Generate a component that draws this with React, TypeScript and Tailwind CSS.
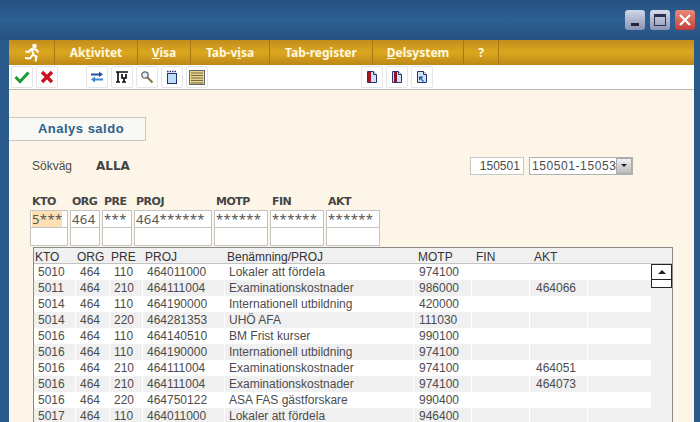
import React from "react";

const menu = [
  { w: "w-[83px]", pre: "Ak", u: "t", post: "ivitet" },
  { w: "w-[53px]", pre: "", u: "V", post: "isa" },
  { w: "w-[79px]", pre: "Tab-v", u: "i", post: "sa" },
  { w: "w-[103px]", pre: "Tab-re", u: "g", post: "ister" },
  { w: "w-[91px]", pre: "", u: "D", post: "elsystem" },
  { w: "w-[35px]", pre: "?", u: "", post: "" },
];

const filters = [
  { label: "KTO", w: "w-[38px]", value: "5***", hl: true },
  { label: "ORG", w: "w-[30px]", value: "464" },
  { label: "PRE", w: "w-[30px]", value: "***" },
  { label: "PROJ", w: "w-[78px]", value: "464******" },
  { label: "MOTP", w: "w-[54px]", value: "******" },
  { label: "FIN", w: "w-[54px]", value: "******" },
  { label: "AKT", w: "w-[54px]", value: "******" },
];

const headers = [
  { t: "KTO", pad: "pl-[1px]" },
  { t: "ORG", pad: "pl-[1px]" },
  { t: "PRE", pad: "pl-[1px]" },
  { t: "PROJ", pad: "pl-[2px]" },
  { t: "Benämning/PROJ", pad: "pl-[2px]" },
  { t: "MOTP", pad: "pl-[4px]" },
  { t: "FIN", pad: "pl-[4px]" },
  { t: "AKT", pad: "pl-[4px]" },
];

const cellPad = ["pl-[4px]", "pl-[4px]", "pl-[4px]", "pl-[4px]", "pl-[4px]", "pl-[5px]", "pl-[4px]", "pl-[6px]"];

const rows = [
  ["5010", "464", "110", "464011000", "Lokaler att fördela", "974100", "", ""],
  ["5011", "464", "210", "464111004", "Examinationskostnader", "986000", "", "464066"],
  ["5014", "464", "110", "464190000", "Internationell utbildning", "420000", "", ""],
  ["5014", "464", "220", "464281353", "UHÖ AFA", "111030", "", ""],
  ["5016", "464", "110", "464140510", "BM Frist kurser", "990100", "", ""],
  ["5016", "464", "110", "464190000", "Internationell utbildning", "974100", "", ""],
  ["5016", "464", "210", "464111004", "Examinationskostnader", "974100", "", "464051"],
  ["5016", "464", "210", "464111004", "Examinationskostnader", "974100", "", "464073"],
  ["5016", "464", "220", "464750122", "ASA FAS gästforskare", "990400", "", ""],
  ["5017", "464", "110", "464011000", "Lokaler att fördela", "946400", "", ""],
];

const colClass = "grid grid-cols-[42px_34px_33px_82px_189px_58px_58px_58px_63px_1fr]";

const ToolBtn = ({ children }: { children: React.ReactNode }) => (
  <div className="w-[22px] h-[22px] shrink-0 flex items-center justify-center rounded-[2px] border border-[#e6e6e6] bg-white">
    {children}
  </div>
);

const DocIcon = ({ mark }: { mark: "left" | "mid" | "arrow" }) => (
  <svg width="14" height="14" viewBox="0 0 14 14">
    <path d="M2.500 1.500h6l3 3v8h-9z" fill="#cfe2f5" stroke="#26336b" />
    <path d="M8.500 1.500v3h3" fill="#fff" stroke="#26336b" />
    {mark === "left" && <rect x="3" y="2" width="3" height="10" fill="#a8142a" />}
    {mark === "mid" && <rect x="4" y="2" width="3" height="10" fill="#8c1230" />}
    {mark === "arrow" && <path d="M9 11 6.500 8.500 8.500 6.500H4V10.500L5.500 9 8 12z" fill="#1f50b0" />}
  </svg>
);

export default function App() {
  return (
    <div className="w-[700px] h-[422px] overflow-hidden bg-[#2a5a8c] font-['Liberation_Sans',sans-serif] text-[12px] text-[#4c4c4c]">
      {/* titlebar */}
      <div className="h-[40px] flex items-start justify-end gap-[5px] pt-[10px] pr-[5px] bg-gradient-to-b from-[#25527f] via-[#2e6095] to-[#25527f]">
        <div className="w-[20px] h-[20px] rounded-[3px] bg-gradient-to-b from-[#cfd6e6] to-[#8d94b4] flex items-end justify-center pb-[4px]">
          <div className="w-[8px] h-[3px] bg-[#23283f]" />
        </div>
        <div className="w-[20px] h-[20px] rounded-[3px] bg-gradient-to-b from-[#d8deeb] to-[#8d94b4] flex items-center justify-center">
          <div className="w-[12px] h-[12px] border border-[#2a3050] border-t-[3px]" />
        </div>
        <div className="w-[20px] h-[20px] rounded-[3px] bg-gradient-to-b from-[#e88a78] to-[#c43c3c] flex items-center justify-center">
          <svg width="14" height="14" viewBox="0 0 14 14">
            <path d="M2 2l10 10M12 2 2 12" stroke="#fff" strokeWidth="2.200" />
          </svg>
        </div>
      </div>

      <div className="ml-[9px] w-[685px] h-[382px] bg-[#fdf6e8]">
        {/* menu */}
        <div className="h-[25px] flex bg-gradient-to-b from-[#c28c1c] via-[#dca81f] to-[#bd8717] font-['Noto_Sans',sans-serif] font-bold text-[12px] text-[#fff8e0]">
          <div className="w-[46px] flex items-center justify-center border-r border-[#a87a14]">
            <svg width="18" height="20" viewBox="0 0 18 20">
              <circle cx="11.500" cy="3" r="2.300" fill="#fff" />
              <path d="M8 6l5 .5 2.500 3M8.500 6 5.500 9 2.500 8.500M9 7l1.500 5 3 1.500-1 5M9.500 12 7 15.500 2 15" fill="none" stroke="#fff" strokeWidth="2" />
            </svg>
          </div>
          {menu.map((m) => (
            <div key={m.pre + m.u} className={`${m.w} flex items-center justify-center border-r border-[#a87a14]`}>
              <span>
                {m.pre}
                {m.u && <span className="underline">{m.u}</span>}
                {m.post}
              </span>
            </div>
          ))}
        </div>

        {/* toolbar */}
        <div className="h-[25px] flex items-center gap-[3px] pl-[2px] bg-white border-b border-[#bdb8ae]">
          <ToolBtn>
            <svg width="16" height="14" viewBox="0 0 16 14">
              <path d="M1.500 7 6 11.500 14.500 2.500" fill="none" stroke="#1f9a35" strokeWidth="3" />
            </svg>
          </ToolBtn>
          <ToolBtn>
            <svg width="14" height="14" viewBox="0 0 14 14">
              <path d="M2 2l10 10M12 2 2 12" stroke="#c8141e" strokeWidth="3.400" />
            </svg>
          </ToolBtn>
          <div className="w-[22px]" />
          <ToolBtn>
            <svg width="14" height="12" viewBox="0 0 14 12">
              <path d="M1 2.500h8V.5l4 3-4 2.500V4.500H1z" fill="#2b4fa0" />
              <path d="M13 7.500H5V5.500L1 8.500l4 3V9.500h8z" fill="#3d86cc" />
            </svg>
          </ToolBtn>
          <ToolBtn>
            <svg width="14" height="12" viewBox="0 0 14 12">
              <path d="M1 1h12M3 1v10M1 11h4M7 3v4h4V3M9 7v4M7 11h4" fill="none" stroke="#111" strokeWidth="1.700" />
            </svg>
          </ToolBtn>
          <ToolBtn>
            <svg width="14" height="14" viewBox="0 0 14 14">
              <circle cx="5" cy="5" r="3.200" fill="#e4eef5" stroke="#666" strokeWidth="1.300" />
              <path d="M7.500 7.500 12.500 12.500" stroke="#8a7040" strokeWidth="2" />
            </svg>
          </ToolBtn>
          <ToolBtn>
            <svg width="14" height="15" viewBox="0 0 14 15">
              <rect x="2.500" y="3.500" width="9" height="10" fill="#bfdcf5" stroke="#26336b" />
              <path d="M2 1.500h10" stroke="#26336b" strokeWidth="1.500" strokeDasharray="1.500 1" />
            </svg>
          </ToolBtn>
          <ToolBtn>
            <svg width="16" height="15" viewBox="0 0 16 15">
              <rect x=".5" y=".5" width="15" height="14" fill="#e6d28e" stroke="#666" />
              <path d="M2 3h12M2 5.500h12M2 8h12M2 10.500h12M2 13h12" stroke="#7a6a45" />
            </svg>
          </ToolBtn>
          <div className="w-[147px]" />
          <ToolBtn><DocIcon mark="left" /></ToolBtn>
          <ToolBtn><DocIcon mark="mid" /></ToolBtn>
          <ToolBtn><DocIcon mark="arrow" /></ToolBtn>
        </div>

        {/* tab */}
        <div className="mt-[27px] w-[137px] h-[24px] flex items-center justify-center pl-[8px] bg-[#f8f8f4] border border-l-0 border-[#c8c8c4] font-bold text-[13px] tracking-[0.5px] text-[#2f5f8f]">
          Analys saldo
        </div>

        {/* path row */}
        <div className="mt-[15px] h-[19px] flex items-center pl-[23px]">
          <span className="w-[64px]">Sökväg</span>
          <span className="font-['DejaVu_Sans',sans-serif] font-bold text-[12px] mt-[1px] text-[#444]">ALLA</span>
          <div className="ml-[340px] w-[54px] h-[18px] flex items-center justify-end pr-[3px] bg-white border border-[#c8c8c8]">150501</div>
          <div className="ml-[5px] w-[104px] h-[18px] flex items-center bg-white border border-[#b0b0b0] pl-[2px] overflow-hidden">
            <span className="w-[84px] overflow-hidden whitespace-nowrap tracking-[0.6px]">150501-15053</span>
            <div className="ml-auto w-[16px] h-[16px] flex items-center justify-center bg-gradient-to-b from-[#f0f0f0] to-[#bbb] border border-[#aaa]">
              <div className="w-0 h-0 border-x-[3px] border-x-transparent border-t-[3px] border-t-[#222]" />
            </div>
          </div>
        </div>

        {/* filters */}
        <div className="mt-[17px] ml-[21px] flex gap-[2px]">
          {filters.map((f) => (
            <div key={f.label} className={f.w}>
              <div className="h-[18px] pl-[2px] pt-[1px] font-['DejaVu_Sans',sans-serif] font-bold text-[11px] tracking-[-0.5px] leading-[18px] text-[#444]">{f.label}</div>
              <div className="h-[18px] border border-[#c4c4c4] bg-white pl-[1px] leading-[16px] font-['Noto_Sans',sans-serif] text-[13px] tracking-[0.4px] text-[#555]">
                <span className={f.hl ? "block w-[30px] bg-[#fde0b4]" : ""}>{f.value}</span>
              </div>
              <div className="h-[18px] border border-t-0 border-[#c4c4c4] bg-white" />
            </div>
          ))}
        </div>

        {/* table */}
        <div className="mt-[1px] ml-[24px] w-[640px] h-[180px] border border-[#8a8a8a] bg-[#f0f0f0] relative overflow-hidden">
          <div className={`${colClass} h-[16px] items-center border-b border-[#c4c4c4] bg-[#f0f0f0] text-[#333]`}>
            {headers.map((h) => (
              <span key={h.t} className={`${h.pad} whitespace-nowrap`}>{h.t}</span>
            ))}
          </div>
          {rows.map((r, i) => (
            <div key={i} className={`${colClass} h-[16px] leading-[16px] ${i % 2 ? "bg-[#f0f0f0]" : "bg-white"}`}>
              {r.map((c, j) => (
                <span key={j} className={`${cellPad[j]} whitespace-nowrap border-r border-white`}>{c}</span>
              ))}
              <span />
              <span className="bg-[#f0f0f0]" />
            </div>
          ))}
          <div className="absolute left-[617px] top-[16px] w-[21px] h-[16px] flex items-center justify-center bg-white border border-[#222]">
            <div className="w-0 h-0 border-x-[4px] border-x-transparent border-b-[4px] border-b-[#222]" />
          </div>
          <div className="absolute left-[617px] top-[32px] w-[21px] h-[8px] bg-white border border-t-0 border-[#222]" />
        </div>
      </div>
    </div>
  );
}
